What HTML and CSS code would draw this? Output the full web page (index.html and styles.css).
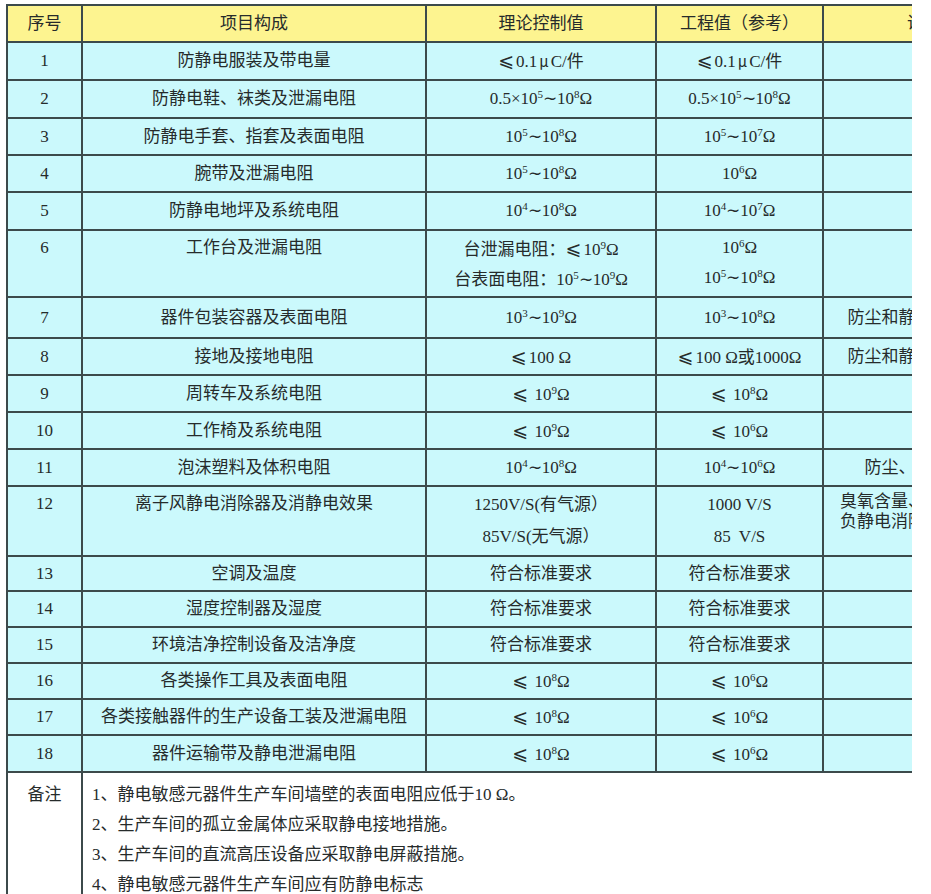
FILE: index.html
```html
<!DOCTYPE html>
<html lang="zh-CN">
<head>
<meta charset="utf-8">
<title>防静电控制项目</title>
<link rel="stylesheet" href="styles.css">
</head>
<body>
<div class="wrap">
  <div class="grid">
    <div class="c h"><span>序号</span></div>
    <div class="c h"><span>项目构成</span></div>
    <div class="c h"><span>理论控制值</span></div>
    <div class="c h"><span>工程值（参考）</span></div>
    <div class="c h c5"><span>说明</span></div>

    <div class="c"><span>1</span></div>
    <div class="c"><span>防静电服装及带电量</span></div>
    <div class="c"><span><i class="le">⩽</i>0.1<i class="mu">μ</i>C/件</span></div>
    <div class="c"><span><i class="le">⩽</i>0.1<i class="mu">μ</i>C/件</span></div>
    <div class="c c5"></div>

    <div class="c"><span>2</span></div>
    <div class="c"><span>防静电鞋、袜类及泄漏电阻</span></div>
    <div class="c"><span>0.5×10<sup>5</sup>∼10<sup>8</sup>Ω</span></div>
    <div class="c"><span>0.5×10<sup>5</sup>∼10<sup>8</sup>Ω</span></div>
    <div class="c c5"></div>

    <div class="c"><span>3</span></div>
    <div class="c"><span>防静电手套、指套及表面电阻</span></div>
    <div class="c"><span>10<sup>5</sup>∼10<sup>8</sup>Ω</span></div>
    <div class="c"><span>10<sup>5</sup>∼10<sup>7</sup>Ω</span></div>
    <div class="c c5"></div>

    <div class="c"><span>4</span></div>
    <div class="c"><span>腕带及泄漏电阻</span></div>
    <div class="c"><span>10<sup>5</sup>∼10<sup>8</sup>Ω</span></div>
    <div class="c"><span>10<sup>6</sup>Ω</span></div>
    <div class="c c5"></div>

    <div class="c"><span>5</span></div>
    <div class="c"><span>防静电地坪及系统电阻</span></div>
    <div class="c"><span>10<sup>4</sup>∼10<sup>8</sup>Ω</span></div>
    <div class="c"><span>10<sup>4</sup>∼10<sup>7</sup>Ω</span></div>
    <div class="c c5"></div>

    <div class="c top"><span>6</span></div>
    <div class="c top"><span>工作台及泄漏电阻</span></div>
    <div class="c top"><span>台泄漏电阻：<i class="le">⩽</i>10<sup>9</sup>Ω<br>台表面电阻：10<sup>5</sup>∼10<sup>9</sup>Ω</span></div>
    <div class="c top"><span>10<sup>6</sup>Ω<br>10<sup>5</sup>∼10<sup>8</sup>Ω</span></div>
    <div class="c c5"></div>

    <div class="c"><span>7</span></div>
    <div class="c"><span>器件包装容器及表面电阻</span></div>
    <div class="c"><span>10<sup>3</sup>∼10<sup>9</sup>Ω</span></div>
    <div class="c"><span>10<sup>3</sup>∼10<sup>8</sup>Ω</span></div>
    <div class="c c5"><span>防尘和静电要求一致</span></div>

    <div class="c"><span>8</span></div>
    <div class="c"><span>接地及接地电阻</span></div>
    <div class="c"><span><i class="le">⩽</i>100 Ω</span></div>
    <div class="c"><span><i class="le">⩽</i>100 Ω或1000Ω</span></div>
    <div class="c c5"><span>防尘和静电要求一致</span></div>

    <div class="c"><span>9</span></div>
    <div class="c"><span>周转车及系统电阻</span></div>
    <div class="c"><span><i class="le">⩽</i> 10<sup>9</sup>Ω</span></div>
    <div class="c"><span><i class="le">⩽</i> 10<sup>8</sup>Ω</span></div>
    <div class="c c5"></div>

    <div class="c"><span>10</span></div>
    <div class="c"><span>工作椅及系统电阻</span></div>
    <div class="c"><span><i class="le">⩽</i> 10<sup>9</sup>Ω</span></div>
    <div class="c"><span><i class="le">⩽</i> 10<sup>6</sup>Ω</span></div>
    <div class="c c5"></div>

    <div class="c"><span>11</span></div>
    <div class="c"><span>泡沫塑料及体积电阻</span></div>
    <div class="c"><span>10<sup>4</sup>∼10<sup>8</sup>Ω</span></div>
    <div class="c"><span>10<sup>4</sup>∼10<sup>6</sup>Ω</span></div>
    <div class="c c5"><span>防尘、防静电等</span></div>

    <div class="c top"><span>12</span></div>
    <div class="c top"><span>离子风静电消除器及消静电效果</span></div>
    <div class="c top tall"><span>1250V/S(有气源）<br>85V/S(无气源）</span></div>
    <div class="c top tall"><span>1000 V/S<br>85&nbsp; V/S</span></div>
    <div class="c c5 tight"><span>臭氧含量、平衡电压等<br>负静电消除时间达标</span></div>

    <div class="c"><span>13</span></div>
    <div class="c"><span>空调及温度</span></div>
    <div class="c"><span>符合标准要求</span></div>
    <div class="c"><span>符合标准要求</span></div>
    <div class="c c5"></div>

    <div class="c"><span>14</span></div>
    <div class="c"><span>湿度控制器及湿度</span></div>
    <div class="c"><span>符合标准要求</span></div>
    <div class="c"><span>符合标准要求</span></div>
    <div class="c c5"></div>

    <div class="c"><span>15</span></div>
    <div class="c"><span>环境洁净控制设备及洁净度</span></div>
    <div class="c"><span>符合标准要求</span></div>
    <div class="c"><span>符合标准要求</span></div>
    <div class="c c5"></div>

    <div class="c"><span>16</span></div>
    <div class="c"><span>各类操作工具及表面电阻</span></div>
    <div class="c"><span><i class="le">⩽</i> 10<sup>8</sup>Ω</span></div>
    <div class="c"><span><i class="le">⩽</i> 10<sup>6</sup>Ω</span></div>
    <div class="c c5"></div>

    <div class="c"><span>17</span></div>
    <div class="c"><span>各类接触器件的生产设备工装及泄漏电阻</span></div>
    <div class="c"><span><i class="le">⩽</i> 10<sup>8</sup>Ω</span></div>
    <div class="c"><span><i class="le">⩽</i> 10<sup>6</sup>Ω</span></div>
    <div class="c c5"></div>

    <div class="c"><span>18</span></div>
    <div class="c"><span>器件运输带及静电泄漏电阻</span></div>
    <div class="c"><span><i class="le">⩽</i> 10<sup>8</sup>Ω</span></div>
    <div class="c"><span><i class="le">⩽</i> 10<sup>6</sup>Ω</span></div>
    <div class="c c5"></div>

    <div class="c top note nlabel"><span>备注</span></div>
    <div class="c note notes">
      <p>1、静电敏感元器件生产车间墙壁的表面电阻应低于10 Ω。</p>
      <p>2、生产车间的孤立金属体应采取静电接地措施。</p>
      <p>3、生产车间的直流高压设备应采取静电屏蔽措施。</p>
      <p>4、静电敏感元器件生产车间应有防静电标志</p>
    </div>
  </div>
</div>
</body>
</html>
```

FILE: styles.css
```css
html, body {
  margin: 0;
  padding: 0;
  background: #ffffff;
}

body {
  font-family: "Liberation Serif", "Noto Sans CJK SC", serif;
  font-size: 17px;
  color: #262b2b;
}

.wrap {
  width: 906px;
  height: 890px;
  margin: 4px 0 0 6px;
  overflow: hidden;
}

.grid {
  display: grid;
  width: max-content;
  grid-template-columns: 73px 342px 228px 165px 200px;
  grid-template-rows: 35px 36px 36px 35px 35px 36px 65px 39px 35px 35px 35px 35px 68px 33px 34px 34px 34px 34px 35px 130px;
  gap: 2px;
  padding: 2px;
  background: #3c4a4b;
}

.c {
  display: flex;
  align-items: center;
  justify-content: center;
  text-align: center;
  background: #cbf9fc;
  line-height: 30px;
  white-space: nowrap;
  overflow: hidden;
}

.c i {
  font-style: normal;
}

.h {
  background: #fdf490;
}

.top {
  align-items: flex-start;
  padding-top: 2px;
}

.tall {
  line-height: 32px;
}

.tight {
  align-items: flex-start;
  justify-content: flex-start;
  text-align: left;
  padding: 5px 0 0 16px;
  line-height: 20px;
}

.le {
  font-family: "DejaVu Sans", "Noto Sans CJK SC", sans-serif;
  font-size: 19px;
  margin-right: 2px;
}

.mu {
  font-family: "Noto Sans CJK SC", sans-serif;
  font-size: 15px;
  margin: 0 2px;
}

sup {
  font-size: 11px;
  line-height: 0;
  vertical-align: 6px;
}

.note {
  background: #ffffff;
}

.nlabel {
  padding-top: 7px;
}

.notes {
  grid-column: 2 / 6;
  flex-direction: column;
  align-items: flex-start;
  justify-content: flex-start;
  padding: 7px 0 0 9px;
}

.notes p {
  margin: 0;
  line-height: 30px;
}
```
